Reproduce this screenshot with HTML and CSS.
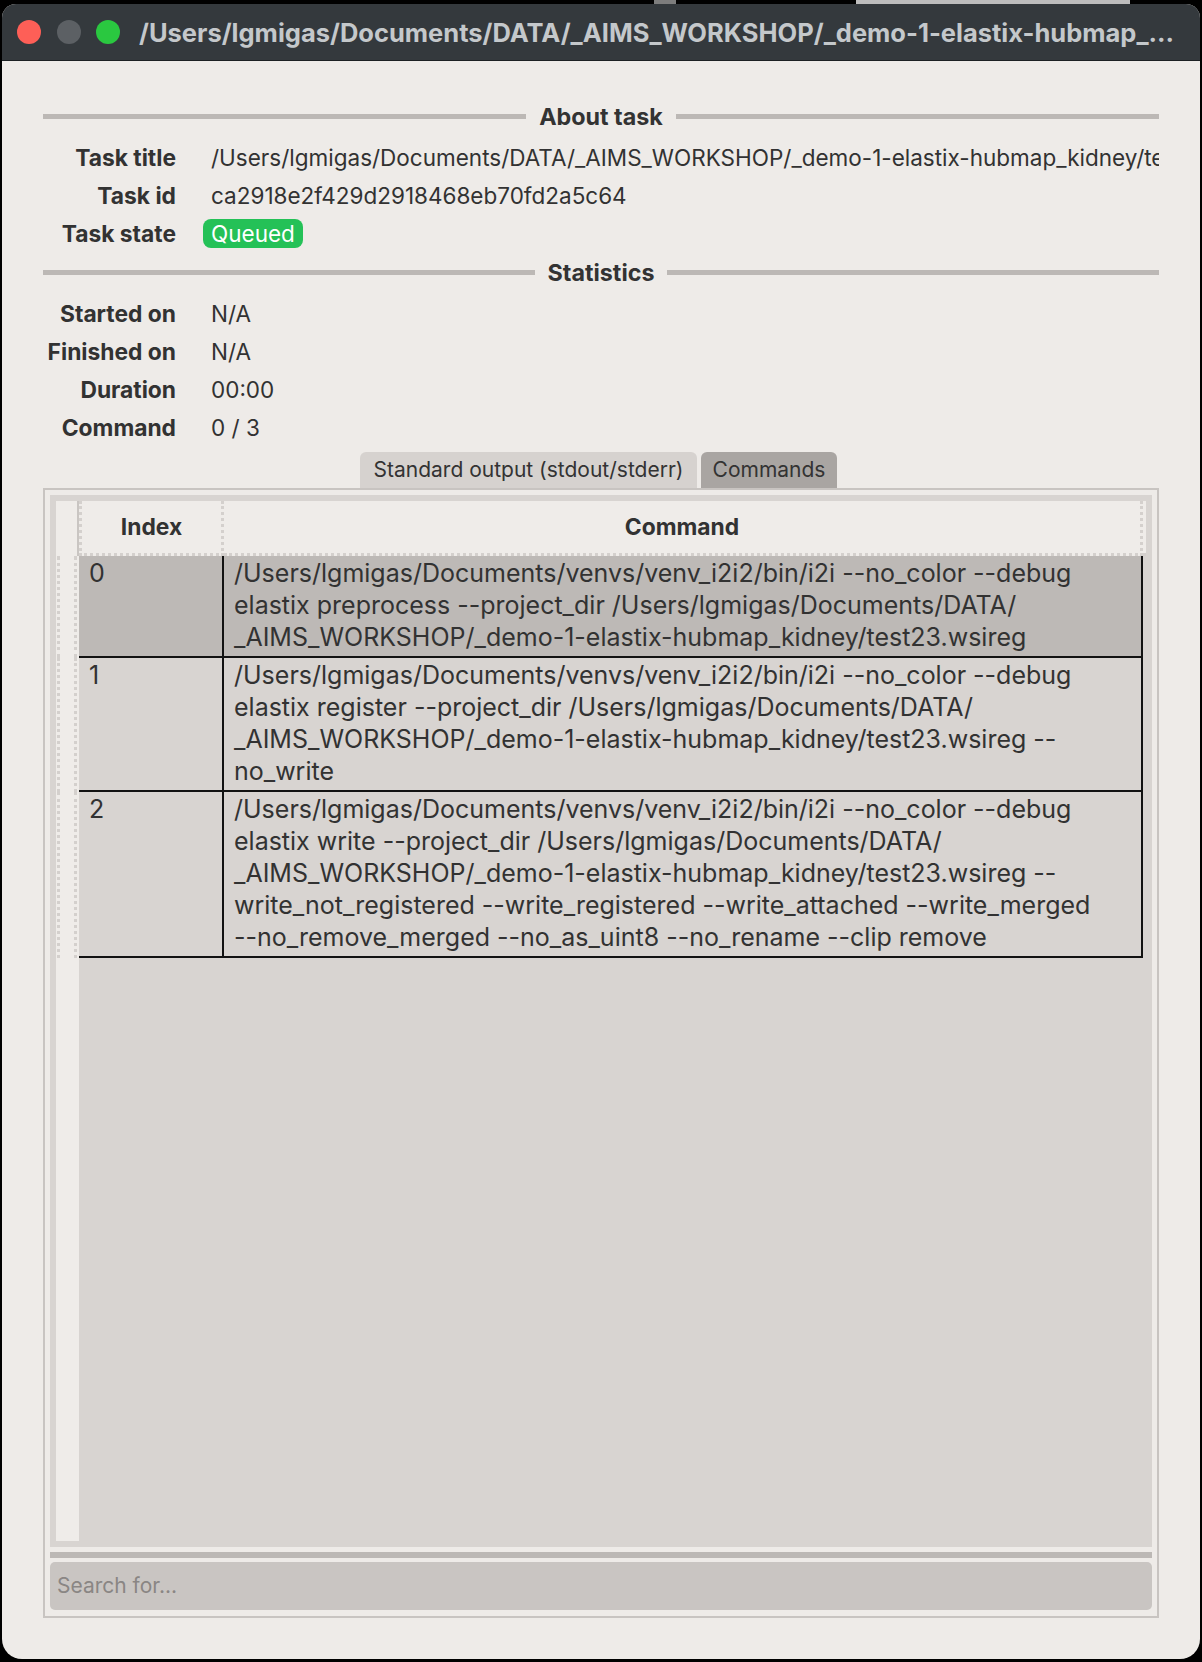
FILE: index.html
```html
<!DOCTYPE html>
<html lang="en">
<head>
<meta charset="utf-8">
<title>Task</title>
<link rel="stylesheet" href="styles.css">
</head>
<body>
<div class="behind"><span class="behind-a"></span><span class="behind-b"></span></div>
<div class="window">
  <div class="titlebar">
    <span class="light red"></span>
    <span class="light grey"></span>
    <span class="light green"></span>
    <span class="wtitle">/Users/lgmigas/Documents/DATA/_AIMS_WORKSHOP/_demo-1-elastix-hubmap_...</span>
  </div>
  <div class="content">
    <div class="section"><span class="rule"></span><span class="stitle">About task</span><span class="rule"></span></div>
    <div class="info">
      <div class="lbl">Task title</div><div class="val clip">/Users/lgmigas/Documents/DATA/_AIMS_WORKSHOP/_demo-1-elastix-hubmap_kidney/test23.wsireg</div>
      <div class="lbl">Task id</div><div class="val">ca2918e2f429d2918468eb70fd2a5c64</div>
      <div class="lbl">Task state</div><div class="val"><span class="badge">Queued</span></div>
    </div>
    <div class="section stats"><span class="rule"></span><span class="stitle">Statistics</span><span class="rule"></span></div>
    <div class="info">
      <div class="lbl">Started on</div><div class="val">N/A</div>
      <div class="lbl">Finished on</div><div class="val">N/A</div>
      <div class="lbl">Duration</div><div class="val">00:00</div>
      <div class="lbl">Command</div><div class="val">0 / 3</div>
    </div>
    <div class="tabs">
      <div class="tab">Standard output (stdout/stderr)</div>
      <div class="tab active">Commands</div>
    </div>
    <div class="pane">
      <div class="tv">
        <div class="tv-inner">
          <div class="thead">
            <div class="corner"></div>
            <div class="th idx">Index</div>
            <div class="th cmd">Command</div>
            <div class="th-rest"></div>
          </div>
          <div class="tr sel">
            <div class="vh"></div>
            <div class="cells">
              <div class="td idx">0</div>
              <div class="td cmd">/Users/lgmigas/Documents/venvs/venv_i2i2/bin/i2i --no_color --debug<br>elastix preprocess --project_dir /Users/lgmigas/Documents/DATA/<br>_AIMS_WORKSHOP/_demo-1-elastix-hubmap_kidney/test23.wsireg</div>
            </div>
          </div>
          <div class="tr">
            <div class="vh"></div>
            <div class="cells">
              <div class="td idx">1</div>
              <div class="td cmd">/Users/lgmigas/Documents/venvs/venv_i2i2/bin/i2i --no_color --debug<br>elastix register --project_dir /Users/lgmigas/Documents/DATA/<br>_AIMS_WORKSHOP/_demo-1-elastix-hubmap_kidney/test23.wsireg --<br>no_write</div>
            </div>
          </div>
          <div class="tr">
            <div class="vh"></div>
            <div class="cells">
              <div class="td idx">2</div>
              <div class="td cmd">/Users/lgmigas/Documents/venvs/venv_i2i2/bin/i2i --no_color --debug<br>elastix write --project_dir /Users/lgmigas/Documents/DATA/<br>_AIMS_WORKSHOP/_demo-1-elastix-hubmap_kidney/test23.wsireg --<br>write_not_registered --write_registered --write_attached --write_merged<br>--no_remove_merged --no_as_uint8 --no_rename --clip remove</div>
            </div>
          </div>
        </div>
      </div>
      <div class="splitter"></div>
      <div class="search">Search for...</div>
    </div>
  </div>
</div>
</body>
</html>
```
FILE: styles.css
```css
html, body {
  margin: 0;
  padding: 0;
}
body {
  width: 1202px;
  height: 1662px;
  overflow: hidden;
  background: #000;
  font-family: Inter, "Liberation Sans", sans-serif;
  color: #323232;
}
.behind {
  height: 4px;
  display: flex;
}
.behind-a {
  margin-left: 654px;
  width: 22px;
  background: #7d7d7d;
}
.behind-b {
  margin-left: 180px;
  width: 274px;
  background: #bdbdbd;
}
.window {
  margin-left: 2px;
  width: 1198px;
  height: 1655px;
  background: #eeebe8;
  border-radius: 14px 14px 20px 20px;
  overflow: hidden;
  display: flex;
  flex-direction: column;
}
.titlebar {
  height: 56px;
  flex: none;
  background: #34393d;
  border-bottom: 1px solid #1c2023;
  display: flex;
  align-items: center;
  padding-left: 15px;
}
.light {
  width: 24px;
  height: 24px;
  border-radius: 50%;
  flex: none;
}
.red { background: #fe5f57; }
.grey { background: #5c6064; margin-left: 16px; }
.green { background: #2ac840; margin-left: 15px; }
.wtitle {
  margin-left: 19px;
  font-size: 25.5px;
  font-weight: 700;
  color: #c4c8cb;
  white-space: nowrap;
}
.content {
  flex: 1;
  padding: 36px 41px 0 41px;
  display: flex;
  flex-direction: column;
}
.section {
  height: 38px;
  display: flex;
  align-items: center;
  margin-bottom: 3px;
}
.section.stats {
  margin-top: 1px;
}
.rule {
  flex: 1;
  height: 5px;
  background: #bcb8b5;
}
.stitle {
  font-size: 23.3px;
  font-weight: 700;
  margin: 0 13px;
  color: #333;
}
.info {
  display: grid;
  grid-template-columns: 133px 1fr;
  column-gap: 35px;
  grid-auto-rows: 38px;
  align-items: center;
}
.lbl {
  text-align: right;
  font-weight: 700;
  font-size: 22.8px;
  white-space: nowrap;
}
.val {
  font-size: 22.5px;
  white-space: nowrap;
}
.clip {
  overflow: hidden;
}
.badge {
  display: inline-block;
  margin-left: -8px;
  height: 29px;
  line-height: 29px;
  padding: 0 8px 0 8px;
  border-radius: 8px;
  background: #24c157;
  color: #fff;
}
.tabs {
  margin-top: 6px;
  padding-left: 317px;
  display: flex;
  gap: 4px;
  height: 36px;
}
.tab {
  height: 36px;
  line-height: 36px;
  width: 337px;
  text-align: center;
  background: #d6d2cf;
  border-radius: 6px 6px 0 0;
  font-size: 21px;
  color: #333;
}
.tab.active {
  width: 136px;
  background: #a9a5a2;
}
.pane {
  height: 1130px;
  box-sizing: border-box;
  border: 2px solid #c8c4c1;
  padding: 5px 5px 6px 5px;
  display: flex;
  flex-direction: column;
}
.tv {
  height: 1052px;
  flex: none;
  box-sizing: border-box;
  background: #d8d4d1;
  padding: 6px;
  display: flex;
}
.tv-inner {
  flex: 1;
  background: linear-gradient(90deg, #efece9 0 23px, transparent 23px);
  display: flex;
  flex-direction: column;
}
.thead {
  height: 55px;
  display: flex;
  background: #efece9;
  flex: none;
}
.corner {
  width: 23px;
  box-sizing: border-box;
  border-right: 2px solid #c9c5c2;
}
.th {
  box-sizing: border-box;
  font-size: 22.8px;
  font-weight: 700;
  text-align: center;
  line-height: 51px;
  border-bottom: 3px dotted #d4d0cd;
  border-right: 3px dotted #d4d0cd;
}
.th.idx {
  width: 145px;
  border-left: 3px dotted #d4d0cd;
}
.th.cmd {
  width: 919px;
}
.th-rest {
  flex: 1;
  border-bottom: 3px dotted #d4d0cd;
}
.tr {
  display: flex;
}
.vh {
  box-sizing: border-box;
  border-left: 3px dotted #d4d0cd;
  border-right: 3px dotted #d4d0cd;
  margin-left: 1px;
  width: 20px;
  margin-right: 2px;
}
.cells {
  display: flex;
  border-bottom: 2px solid #121212;
}
.td {
  box-sizing: border-box;
  font-size: 25px;
  line-height: 32px;
  padding: 1px 0 3px 10px;
  border-right: 2px solid #121212;
  white-space: nowrap;
}
.td.idx {
  width: 145px;
}
.td.cmd {
  width: 919px;
}
.tr.sel .td {
  background: #bdb9b6;
}
.splitter {
  height: 6px;
  margin-top: 5px;
  background: #bcb8b5;
  flex: none;
}
.search {
  margin-top: 4px;
  height: 48px;
  line-height: 48px;
  border-radius: 5px;
  background: #c9c5c2;
  color: #8a8684;
  font-size: 21px;
  padding-left: 7px;
}
```
